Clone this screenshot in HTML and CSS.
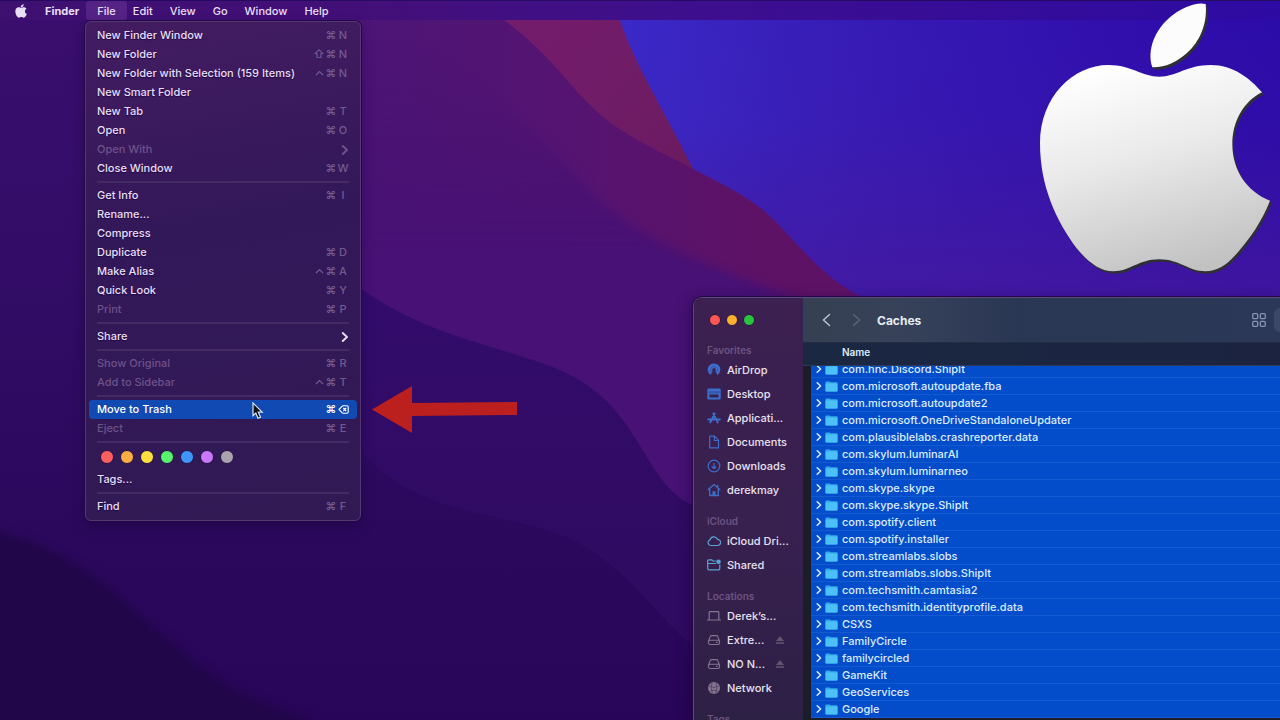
FILE: index.html
```html
<!DOCTYPE html>
<html lang="en">
<head>
<meta charset="utf-8">
<title>Finder</title>
<link rel="stylesheet" href="styles.css">
</head>
<body>
<svg class="defs" aria-hidden="true">
  <symbol id="folder" viewBox="0 0 13 11"><path d="M0.5 1.2Q0.5 .5 1.3 .5H4.6L5.8 1.2H11.8Q12.5 1.2 12.5 2V9.6Q12.5 10.5 11.7 10.5H1.3Q.5 10.5 .5 9.7Z" fill="#36a9ee"/><path d="M.5 2.6H12.5V9.6Q12.5 10.5 11.7 10.5H1.3Q.5 10.5 .5 9.7Z" fill="#4cc0f8"/></symbol>
  <symbol id="chev" viewBox="0 0 6 8"><path d="M1.2 .8 4.6 4 1.2 7.2" fill="none" stroke="currentColor" stroke-width="1.5" stroke-linecap="round" stroke-linejoin="round"/></symbol>
  <symbol id="ctrl" viewBox="0 0 9 8"><path d="M1 5 4.500 1.500 8 5" fill="none" stroke="currentColor" stroke-width="1.200"/></symbol>
  <symbol id="disk" viewBox="0 0 14 14"><path d="M1.5 8 3.2 3.6Q3.6 2.6 4.6 2.6H9.4Q10.4 2.6 10.8 3.6L12.5 8V10Q12.5 11.5 11 11.5H3Q1.5 11.5 1.5 10ZM1.8 8Q2 7.2 3 7.2H11Q12 7.2 12.2 8M9 9.4H10.6" fill="none" stroke="currentColor" stroke-width="1.1"/></symbol>
  <symbol id="eject" viewBox="0 0 10 10"><path d="M5 1 9 6H1ZM1 7.2H9V8.8H1Z" fill="currentColor"/></symbol>
  <linearGradient id="silver" x1="0.3" y1="0" x2="0.6" y2="1"><stop offset="0" stop-color="#fff"/><stop offset=".45" stop-color="#e9e9e9"/><stop offset="1" stop-color="#c2c2c2"/></linearGradient>
</svg>

<div class="desktop">
<svg class="wallpaper" viewBox="0 0 1280 720" preserveAspectRatio="xMidYMid slice" aria-hidden="true">
  <defs>
    <linearGradient id="sky" x1="600" y1="100" x2="1280" y2="0" gradientUnits="userSpaceOnUse"><stop offset="0" stop-color="#3b2bcb"/><stop offset=".35" stop-color="#371cb6"/><stop offset=".75" stop-color="#300fad"/><stop offset="1" stop-color="#2b0ba8"/></linearGradient>
    <linearGradient id="skyfade" x1="0" y1="0" x2="0" y2="300" gradientUnits="userSpaceOnUse"><stop offset="0" stop-color="#45189b" stop-opacity="0"/><stop offset=".4" stop-color="#45189b" stop-opacity=".1"/><stop offset="1" stop-color="#45189b" stop-opacity=".75"/></linearGradient>
    <linearGradient id="red" x1="510" y1="20" x2="690" y2="170" gradientUnits="userSpaceOnUse"><stop offset="0" stop-color="#741c6d"/><stop offset="1" stop-color="#6b1b60"/></linearGradient>
    <linearGradient id="plum" x1="90" y1="0" x2="750" y2="0" gradientUnits="userSpaceOnUse"><stop offset="0" stop-color="#3c1070"/><stop offset=".45" stop-color="#4e1576"/><stop offset=".75" stop-color="#561471"/><stop offset="1" stop-color="#5d1266"/></linearGradient>
    <linearGradient id="violet" x1="0" y1="50" x2="0" y2="250" gradientUnits="userSpaceOnUse"><stop offset="0" stop-color="#43106e" stop-opacity="0"/><stop offset="1" stop-color="#481175"/></linearGradient>
    <linearGradient id="left" x1="0" y1="0" x2="0" y2="720" gradientUnits="userSpaceOnUse"><stop offset="0" stop-color="#3a0e6e"/><stop offset=".3" stop-color="#340d69"/><stop offset=".555" stop-color="#2e0b60"/><stop offset="1" stop-color="#280558"/></linearGradient>
    <linearGradient id="indigo" x1="0" y1="240" x2="0" y2="560" gradientUnits="userSpaceOnUse"><stop offset="0" stop-color="#330c6d"/><stop offset="1" stop-color="#300b62"/></linearGradient>
    <linearGradient id="deep" x1="0" y1="400" x2="0" y2="720" gradientUnits="userSpaceOnUse"><stop offset="0" stop-color="#2e0b60"/><stop offset="1" stop-color="#280558"/></linearGradient>
    <filter id="soft" x="-10%" y="-10%" width="120%" height="120%" color-interpolation-filters="sRGB"><feGaussianBlur stdDeviation="4"/></filter>
  </defs>
  <path d="M0 0H1280V720H0Z" fill="url(#sky)"/>
  <path d="M0 0H1280V720H0Z" fill="url(#skyfade)"/>
  <path d="M0 0H613L620 20C635 66 667 115 693 169L700 400H0Z" fill="url(#red)"/>
  <path d="M0 0H485L504 20C545 50 565 80 590 105C622 137 660 150 693 169C726 186 752 198 774 220C800 246 820 275 861 297L1000 400V720H0Z" fill="url(#plum)"/>
  <path d="M0 0H360C440 50 540 130 600 200C660 255 730 270 810 305V720H0Z" fill="url(#violet)" filter="url(#soft)"/>
  <path d="M100 170C200 190 290 240 360 288C430 338 500 345 560 370C640 405 640 475 688 503L760 530V720H100Z" fill="url(#indigo)"/>
  <path d="M100 340C210 360 300 400 360 450C420 518 500 510 567 537C635 570 650 615 710 660V720H100Z" fill="url(#deep)"/>
  <path d="M0 0H100V720H0Z" fill="url(#left)"/>
  <path d="M0 532C85 555 120 600 165 637C215 682 245 700 310 720L300 740H-20V532Z" fill="#210649" filter="url(#soft)"/>
</svg>

<nav class="menubar" aria-label="Menu bar">
  <button class="apple" aria-label="Apple"><svg viewBox="40 0 720 830" width="12" height="14"><path fill="currentColor" d="M418 230C470 230 500 195 572 195C640 195 690 235 726 277C670 305 637 365 637 433C637 510 680 575 750 602C725 665 690 715 655 755C620 797 590 814 556 814C505 814 480 778 418 778C355 778 330 814 280 814C235 814 200 780 170 745C110 665 60 560 60 430C60 290 160 195 265 195C335 195 365 230 418 230ZM397 202C380 150 405 90 450 52C485 22 530 5 557 12C563 70 540 125 500 160C470 187 435 203 397 202Z"/></svg></button>
  <button class="app">Finder</button><button class="open">File</button><button>Edit</button><button>View</button><button>Go</button><button>Window</button><button>Help</button>
</nav>

<div class="menu" role="menu">
  <button role="menuitem">New Finder Window<kbd><i>⌘</i><b>N</b></kbd></button>
  <button role="menuitem">New Folder<kbd><i>⇧</i><i>⌘</i><b>N</b></kbd></button>
  <button role="menuitem">New Folder with Selection (159 Items)<kbd><svg width="9" height="8"><use href="#ctrl"/></svg><i>⌘</i><b>N</b></kbd></button>
  <button role="menuitem">New Smart Folder</button>
  <button role="menuitem">New Tab<kbd><i>⌘</i><b>T</b></kbd></button>
  <button role="menuitem">Open<kbd><i>⌘</i><b>O</b></kbd></button>
  <button role="menuitem" disabled>Open With<svg class="sub" width="8" height="10"><use href="#chev"/></svg></button>
  <button role="menuitem">Close Window<kbd><i>⌘</i><b>W</b></kbd></button>
  <hr>
  <button role="menuitem">Get Info<kbd><i>⌘</i><b>I</b></kbd></button>
  <button role="menuitem">Rename...</button>
  <button role="menuitem">Compress</button>
  <button role="menuitem">Duplicate<kbd><i>⌘</i><b>D</b></kbd></button>
  <button role="menuitem">Make Alias<kbd><svg width="9" height="8"><use href="#ctrl"/></svg><i>⌘</i><b>A</b></kbd></button>
  <button role="menuitem">Quick Look<kbd><i>⌘</i><b>Y</b></kbd></button>
  <button role="menuitem" disabled>Print<kbd><i>⌘</i><b>P</b></kbd></button>
  <hr>
  <button role="menuitem">Share<svg class="sub" width="8" height="10"><use href="#chev"/></svg></button>
  <hr>
  <button role="menuitem" disabled>Show Original<kbd><i>⌘</i><b>R</b></kbd></button>
  <button role="menuitem" disabled>Add to Sidebar<kbd><svg width="9" height="8"><use href="#ctrl"/></svg><i>⌘</i><b>T</b></kbd></button>
  <hr>
  <button role="menuitem" class="active">Move to Trash<kbd><i>⌘</i><b><svg width="11" height="9" viewBox="0 0 11 9"><path d="M1 4.5 4 1.3Q4.5 .8 5.2 .8H9Q10.2 .8 10.2 2V7Q10.2 8.2 9 8.2H5.2Q4.5 8.2 4 7.7ZM5.3 3 8.2 6M8.2 3 5.3 6" fill="none" stroke="currentColor" stroke-width="1.1"/></svg></b></kbd></button>
  <button role="menuitem" disabled>Eject<kbd><i>⌘</i><b>E</b></kbd></button>
  <hr>
  <div class="tags">
    <button class="tag red" aria-label="Red"></button><button class="tag orange" aria-label="Orange"></button><button class="tag yellow" aria-label="Yellow"></button><button class="tag green" aria-label="Green"></button><button class="tag blue" aria-label="Blue"></button><button class="tag purple" aria-label="Purple"></button><button class="tag gray" aria-label="Gray"></button>
  </div>
  <button role="menuitem">Tags...</button>
  <hr>
  <button role="menuitem">Find<kbd><i>⌘</i><b>F</b></kbd></button>
</div>

<svg class="cursor" width="12" height="18" viewBox="0 0 12 18" aria-hidden="true"><path d="M1 1V13.6L3.8 11.1 6 16.2 8.5 15.1 6.3 10.2H10.2Z" fill="#111" stroke="#dce4f4" stroke-width="1.2"/></svg>
<svg class="arrow" width="146" height="48" viewBox="0 0 146 48" aria-hidden="true"><path d="M0 23.5 40 0V17L145 16V29L40 30V47Z" fill="#bb201e"/></svg>

<section class="window" aria-label="Caches">
  <aside class="sidebar">
    <div class="lights"><button class="close" aria-label="Close"></button><button class="min" aria-label="Minimize"></button><button class="max" aria-label="Zoom"></button></div>
    <h2>Favorites</h2>
    <ul class="tint">
      <li><svg viewBox="0 0 14 14"><path d="M3.600 12A6.300 6.300 0 1 1 10.400 12L8.300 8.200A1.800 1.800 0 1 0 5.700 8.200Z" fill="currentColor"/><path d="M4.500 9.400A3.500 3.500 0 1 1 9.500 9.400" fill="none" stroke="#34358a" stroke-width=".5"/></svg><a href="#">AirDrop</a></li>
      <li><svg viewBox="0 0 14 14"><path fill-rule="evenodd" d="M1.500 1.500H12.500Q13.700 1.500 13.700 2.700V11.300Q13.700 12.500 12.500 12.500H1.500Q.3 12.500 .3 11.300V2.700Q.3 1.500 1.500 1.500ZM2.500 7.500V10.500H11.500V7.500Z" fill="currentColor"/><path d="M1.500 4H12.500V6.500H1.500Z" fill="#3559b0"/></svg><a href="#">Desktop</a></li>
      <li><svg viewBox="0 0 14 14"><path d="M6.200 2.500 10.800 11.500M7.800 2.500 3.200 11.500M1.200 8.500H7.500M9.700 8.500H12.800" fill="none" stroke="currentColor" stroke-width="1.800" stroke-linecap="round"/></svg><a href="#">Applicati...</a></li>
      <li><svg viewBox="0 0 14 14"><path d="M2.700 1.200H7.500L11.500 5.300V12.800H2.700ZM7.300 1.500V5.500H11.200" fill="none" stroke="currentColor" stroke-width="1.200" stroke-linejoin="round"/></svg><a href="#">Documents</a></li>
      <li><svg viewBox="0 0 14 14"><path d="M7 1.200A5.800 5.800 0 1 1 7 12.800 5.800 5.800 0 1 1 7 1.200ZM7 4V9.500M4.700 7.400 7 9.700 9.300 7.400" fill="none" stroke="currentColor" stroke-width="1.200"/></svg><a href="#">Downloads</a></li>
      <li><svg viewBox="0 0 14 14"><path d="M.8 7 7 1.400 13.200 7M2.700 5.600V12.500H11.300V5.600M10.700 1.700V4" fill="none" stroke="currentColor" stroke-width="1.300" stroke-linejoin="round"/><path d="M5.500 12.500V8.300H8.500V12.500Z" fill="currentColor"/></svg><a href="#">derekmay</a></li>
    </ul>
    <h2>iCloud</h2>
    <ul class="sky">
      <li><svg viewBox="0 0 14 14"><path d="M3.600 11.500A2.900 2.900 0 0 1 3 5.900 3.900 3.900 0 0 1 10.400 5.300 3.100 3.100 0 0 1 10.600 11.500Z" fill="none" stroke="currentColor" stroke-width="1.200"/></svg><a href="#">iCloud Dri...</a></li>
      <li><svg viewBox="0 0 14 14"><path d="M8.800 3H5.700L4.700 1.800H1.800Q.7 1.800 .7 3V10.500Q.7 11.800 2 11.800H11.700Q12.800 11.800 12.800 10.500V6.500M.7 5.500H9" fill="none" stroke="currentColor" stroke-width="1.200"/><circle cx="11.500" cy="3.700" r="2.300" fill="currentColor"/></svg><a href="#">Shared</a></li>
    </ul>
    <h2>Locations</h2>
    <ul class="plain">
      <li><svg viewBox="0 0 14 14"><path d="M2.200 10.500V3.500Q2.200 2.700 3 2.700H11Q11.800 2.700 11.800 3.500V10.500M0 11H14" fill="none" stroke="currentColor" stroke-width="1.200"/></svg><a href="#">Derek’s...</a></li>
      <li><svg><use href="#disk"/></svg><a href="#">Extre...</a><button class="eject" aria-label="Eject"><svg><use href="#eject"/></svg></button></li>
      <li><svg><use href="#disk"/></svg><a href="#">NO N...</a><button class="eject" aria-label="Eject"><svg><use href="#eject"/></svg></button></li>
      <li><svg viewBox="0 0 14 14"><circle cx="7" cy="7" r="6" fill="currentColor"/><path d="M1.500 5Q7 8 12.500 5M2.500 10.500Q7 7.500 11.500 10.500M5 1.500Q3 7 5.500 12.500M9 1.500Q11 7 8.500 12.500" fill="none" stroke="#4a3a5c" stroke-width=".7"/></svg><a href="#">Network</a></li>
    </ul>
    <h2>Tags</h2>
  </aside>
  <div class="main">
    <header class="toolbar">
      <button class="back" aria-label="Back"><svg width="9" height="14" viewBox="0 0 9 14"><path d="M7.500 1.500 1.500 7 7.500 12.500" fill="none" stroke="currentColor" stroke-width="1.500" stroke-linecap="round"/></svg></button>
      <button class="fwd" aria-label="Forward"><svg width="9" height="14" viewBox="0 0 9 14"><path d="M1.500 1.500 7.500 7 1.500 12.500" fill="none" stroke="currentColor" stroke-width="1.500" stroke-linecap="round"/></svg></button>
      <h1>Caches</h1>
      <button class="grid" aria-label="Icon view"><svg width="14" height="14" viewBox="0 0 14 14"><g fill="none" stroke="currentColor" stroke-width="1.300"><rect x=".7" y=".7" width="5" height="5" rx="1.300"/><rect x="8.300" y=".7" width="5" height="5" rx="1.300"/><rect x=".7" y="8.300" width="5" height="5" rx="1.300"/><rect x="8.300" y="8.300" width="5" height="5" rx="1.300"/></g></svg></button>
      <button class="listview" aria-label="List view"></button>
    </header>
    <table class="files">
      <thead><tr><th scope="col">Name</th></tr></thead>
      <tbody id="rows"></tbody>
    </table>
  </div>
</section>

<svg class="logo" width="260" height="280" viewBox="0 0 780 840" role="img" aria-label="Apple logo">
  <defs><path id="mark" d="M418 230C470 230 500 195 572 195C640 195 690 235 726 277C670 305 637 365 637 433C637 510 680 575 750 602C725 665 690 715 655 755C620 797 590 814 556 814C505 814 480 778 418 778C355 778 330 814 280 814C235 814 200 780 170 745C110 665 60 560 60 430C60 290 160 195 265 195C335 195 365 230 418 230Z"/><path id="leaf" d="M397 202C380 150 405 90 450 52C485 22 530 5 557 12C563 70 540 125 500 160C470 187 435 203 397 202Z"/></defs>
  <g fill="#2f3036"><use href="#mark" x="3" y="4"/><use href="#mark" x="5" y="7"/><use href="#leaf" x="3" y="4"/><use href="#leaf" x="6" y="7"/></g>
  <use href="#mark" fill="url(#silver)"/><use href="#leaf" fill="#fcfcfd"/>
</svg>
</div>
<script src="files.js"></script>
</body>
</html>
```

FILE: styles.css
```css
* { box-sizing: border-box; }
body {
  margin: 0;
  height: 100vh;
  overflow: hidden;
  font: 500 11px/19px Inter, "Liberation Sans", sans-serif;
  color: #e8dff5;
}
button { margin: 0; padding: 0; border: 0; background: none; color: inherit; font: inherit; }
svg { flex: none; }
.defs { position: absolute; width: 0; height: 0; }
.desktop { position: relative; height: 100%; overflow: hidden; background: #2e0b60; }
.wallpaper { position: absolute; inset: 0; width: 100%; height: 100%; }

.menubar {
  position: relative;
  display: flex;
  height: 20px;
  padding-left: 6px;
  background: linear-gradient(90deg, #3d1070, #430f79 30%, #3d0f8f 55%, #2d0aa3);
  border-top: 1px solid #250a62;
  line-height: 18px;
}
.menubar button { padding: 0 8px 0 9px; }
.menubar .apple { display: flex; align-items: center; padding: 0 9px; }
.menubar .app { font-weight: 700; padding: 0 7px 0 9px; }
.menubar .open { background: #552286; padding: 0 11px; margin-right: -3px; border-radius: 3px; }

.menu {
  position: absolute;
  left: 85px;
  top: 21px;
  width: 276px;
  padding: 4px 3px;
  border: 1px solid #54386f;
  border-radius: 6px;
  background: linear-gradient(170deg, #431c61, #331859 40%, #311a54);
  box-shadow: 0 0 0 1px #230748, 0 6px 14px #14033866;
}
.menu > button {
  display: flex;
  align-items: center;
  width: 100%;
  height: 19px;
  padding: 0 8px;
  border-radius: 4px;
  text-shadow: 0 1px 1px #1d0746;
}
.menu > button:disabled { color: #6d5289; text-shadow: none; }
.menu > .active { background: #124ab4; color: #fff; text-shadow: none; }
.menu hr { height: 2px; margin: 3px 8px; border: 0; background: #452b64; }
kbd { display: flex; align-items: center; margin-left: auto; font: inherit; color: #715a90; text-shadow: none; }
.active kbd { color: #fff; }
kbd > svg { margin-right: 1px; }
kbd i { width: 12px; text-align: center; font-style: normal; font-weight: 600; }
kbd b { display: flex; justify-content: center; width: 12px; font-weight: 500; }
.sub { margin-left: auto; }
.tags { display: flex; gap: 6px; padding: 4px 11px 6px; }
.tag { width: 14px; height: 14px; border-radius: 50%; border: 1px solid #251047; }
.red { background: #fc605e; }
.orange { background: #fdae42; }
.yellow { background: #fddf3f; }
.green { background: #57f36c; }
.blue { background: #3e96fb; }
.purple { background: #ca78fb; }
.gray { background: #aaa3ad; }

.cursor { position: absolute; left: 252px; top: 402px; }
.arrow { position: absolute; left: 372px; top: 386px; }
.logo { position: absolute; right: 0; top: 0; }

.window {
  position: absolute;
  left: 693px;
  right: 0;
  top: 297px;
  bottom: 0;
  display: flex;
  border: solid #5b4a7b;
  border-width: 1px 0 0 1px;
  border-radius: 9px 0 0 0;
  overflow: hidden;
  background: #1d1c29;
  box-shadow: 0 0 0 1px #240749, -3px 3px 14px #12033977;
}
.sidebar {
  flex: none;
  width: 109px;
  padding: 16px 0 0 13px;
  background: linear-gradient(#3b2050, #38204f 55%, #2d2045);
}
.lights { display: flex; gap: 5px; padding-left: 2px; margin-bottom: 17px; }
.lights button { width: 12px; height: 12px; border-radius: 50%; border: 1px solid #2a1740; }
.lights .close { background: #fc5753; }
.lights .min { background: #fdb02e; }
.lights .max { background: #2ac23e; }
h2 { margin: 0; height: 15px; font-size: 10px; line-height: 15px; font-weight: 600; color: #6b5480; }
.sidebar ul { margin: 0 0 12px; padding: 0; list-style: none; }
.sidebar li { display: flex; align-items: center; height: 24px; gap: 6px; }
.sidebar li > svg { width: 14px; height: 14px; }
.sidebar a { color: #e8e0f0; text-decoration: none; }
.tint svg { color: #3c6fcb; }
.sky svg { color: #58a3d2; }
.plain svg { color: #85748f; }
.eject { display: flex; margin-left: auto; margin-right: 18px; }
.eject svg { width: 10px; height: 10px; color: #655572; }

.main { flex: 1; display: flex; flex-direction: column; min-width: 0; }
.toolbar {
  display: flex;
  align-items: center;
  flex: none;
  height: 44px;
  padding-left: 19px;
  background: linear-gradient(90deg, #354052, #37425a 20%, #2a3754 45%, #2b3857);
}
.toolbar button { display: flex; }
.back { color: #b8c1d0; margin-right: 21px; }
.fwd { color: #59647a; }
h1 { flex: 1; margin: 0 0 0 16px; font-size: 12px; font-weight: 700; color: #e9edf5; }
.grid { color: #8894b5; }
.toolbar .listview { width: 6px; height: 24px; margin-left: 8px; border-radius: 6px 0 0 6px; background: #3c4866; }

.files { display: block; color: #dcecff; overflow: hidden; border-spacing: 0; }
.files thead { display: block; position: relative; background: linear-gradient(90deg, #1b2842, #1b2340); border-top: 1px solid #222c43; border-bottom: 1px solid #2b3a5a; }
.files tr { display: block; }
.files th { display: block; height: 22px; padding: 0 0 0 39px; text-align: left; font-size: 10px; line-height: 19px; font-weight: 600; }
.files tbody { display: block; margin: -5px 0 0 8px; }
.files td { display: flex; align-items: center; height: 17px; padding: 0 0 0 5px; line-height: 16px; background: #044dca; border-bottom: 1px solid #145bd1; }
.files .disclose { display: flex; margin-right: 3px; }
.files .folder { margin-right: 4px; }
```

FILE: files.js
```js
const names = [
  "com.hnc.Discord.ShipIt", "com.microsoft.autoupdate.fba", "com.microsoft.autoupdate2",
  "com.microsoft.OneDriveStandaloneUpdater", "com.plausiblelabs.crashreporter.data",
  "com.skylum.luminarAI", "com.skylum.luminarneo", "com.skype.skype", "com.skype.skype.ShipIt",
  "com.spotify.client", "com.spotify.installer", "com.streamlabs.slobs",
  "com.streamlabs.slobs.ShipIt", "com.techsmith.camtasia2", "com.techsmith.identityprofile.data",
  "CSXS", "FamilyCircle", "familycircled", "GameKit", "GeoServices", "Google"
];
document.getElementById("rows").innerHTML = names.map(n =>
  `<tr><td><button class="disclose" aria-label="Expand ${n}"><svg width="6" height="8"><use href="#chev"/></svg></button><svg class="folder" width="13" height="11"><use href="#folder"/></svg>${n}</td></tr>`
).join("");
```
